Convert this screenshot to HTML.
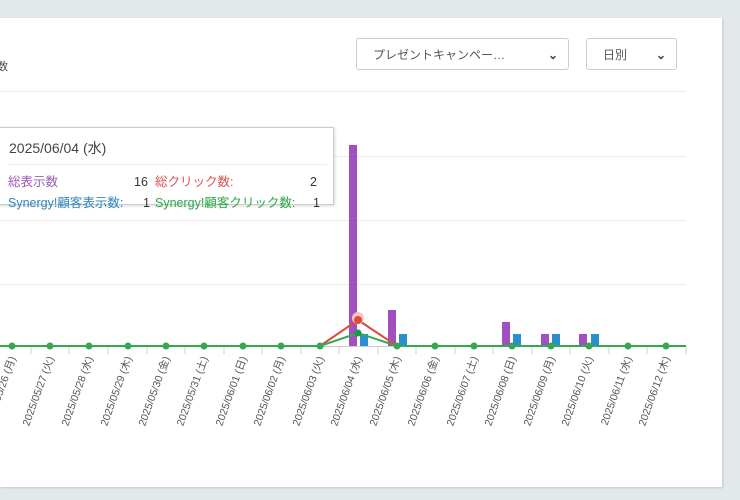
<!DOCTYPE html>
<html><head><meta charset="utf-8"><style>
body{margin:0;width:740px;height:500px;background:#e3e8eb;overflow:hidden;font-family:"Liberation Sans","Noto Sans CJK JP",sans-serif;position:relative}
.card{position:absolute;left:0;top:18px;width:722px;height:469px;background:#fff;box-shadow:1px 1px 2px #c5cacd}
.sel{position:absolute;top:38px;height:32px;border:1px solid #ccc;border-radius:3px;background:#fff;font-size:12px;color:#555;line-height:32px;box-sizing:border-box;padding-left:16px}
.sel span{position:absolute;right:10px;top:0;font-size:12px;font-weight:bold;color:#444}
.tip{position:absolute;left:-2px;top:127px;width:334px;height:76px;background:#fff;border:1px solid #ccc;box-shadow:1px 1px 3px rgba(0,0,0,.15);font-size:12.5px}
.tip div{line-height:16px;height:16px}
</style></head><body>
<div class="card"></div>
<div style="position:absolute;left:-3px;top:58px;font-size:11px;color:#444">数</div>
<div class="sel" style="left:356px;width:213px">プレゼントキャンペー…<span>⌄</span></div>
<div class="sel" style="left:586px;width:91px">日別<span>⌄</span></div>
<svg style="position:absolute;left:0;top:0" width="740" height="500">
<g stroke="#eaeaea" stroke-width="1">
<line x1="0" y1="91.5" x2="686" y2="91.5"/><line x1="0" y1="156.5" x2="686" y2="156.5"/><line x1="0" y1="220.5" x2="686" y2="220.5"/><line x1="0" y1="284.5" x2="686" y2="284.5"/>
</g>
<line x1="0" y1="346.5" x2="686" y2="346.5" stroke="#ccc"/>
<g stroke="#ccc">
<line x1="31" y1="346" x2="31" y2="354"/><line x1="69" y1="346" x2="69" y2="354"/><line x1="108" y1="346" x2="108" y2="354"/><line x1="147" y1="346" x2="147" y2="354"/><line x1="185" y1="346" x2="185" y2="354"/><line x1="224" y1="346" x2="224" y2="354"/><line x1="262" y1="346" x2="262" y2="354"/><line x1="301" y1="346" x2="301" y2="354"/><line x1="339" y1="346" x2="339" y2="354"/><line x1="378" y1="346" x2="378" y2="354"/><line x1="416" y1="346" x2="416" y2="354"/><line x1="455" y1="346" x2="455" y2="354"/><line x1="493" y1="346" x2="493" y2="354"/><line x1="532" y1="346" x2="532" y2="354"/><line x1="570" y1="346" x2="570" y2="354"/><line x1="609" y1="346" x2="609" y2="354"/><line x1="647" y1="346" x2="647" y2="354"/><line x1="686" y1="346" x2="686" y2="354"/>
</g>
<g fill="#a24fbf">
<rect x="349" y="145" width="8" height="201"/><rect x="388" y="310" width="8" height="36"/><rect x="502" y="322" width="8" height="24"/><rect x="541" y="334" width="8" height="12"/><rect x="579" y="334" width="8" height="12"/>
</g>
<g fill="#2a8fd0">
<rect x="360" y="334" width="8" height="12"/><rect x="399" y="334" width="8" height="12"/><rect x="513" y="334" width="8" height="12"/><rect x="552" y="334" width="8" height="12"/><rect x="591" y="334" width="8" height="12"/>
</g>
<polyline points="0,346 320,346 358,320 397,346 686,346" fill="none" stroke="#e04a3a" stroke-width="2"/>
<polyline points="0,346 320,346 358,333 397,346 686,346" fill="none" stroke="#34a853" stroke-width="2"/>
<circle cx="358" cy="318" r="6" fill="#f3c6c2"/><circle cx="358" cy="320" r="4" fill="#e04a3a"/>
<circle cx="358" cy="333" r="3.5" fill="#1a9a45"/>
<g fill="#3aa552">
<circle cx="12" cy="346" r="3.5"/><circle cx="50" cy="346" r="3.5"/><circle cx="89" cy="346" r="3.5"/><circle cx="128" cy="346" r="3.5"/><circle cx="166" cy="346" r="3.5"/><circle cx="204" cy="346" r="3.5"/><circle cx="243" cy="346" r="3.5"/><circle cx="281" cy="346" r="3.5"/><circle cx="320" cy="346" r="3.5"/><circle cx="397" cy="346" r="3.5"/><circle cx="435" cy="346" r="3.5"/><circle cx="474" cy="346" r="3.5"/><circle cx="512" cy="346" r="3.5"/><circle cx="551" cy="346" r="3.5"/><circle cx="589" cy="346" r="3.5"/><circle cx="628" cy="346" r="3.5"/><circle cx="666" cy="346" r="3.5"/>
</g>
<g font-size="10.5" fill="#555" text-anchor="end" font-family="Liberation Sans,Noto Sans CJK JP,sans-serif">
<text transform="translate(16,358) rotate(-70)">2025/05/26 (月)</text>
<text transform="translate(54,358) rotate(-70)">2025/05/27 (火)</text>
<text transform="translate(93,358) rotate(-70)">2025/05/28 (水)</text>
<text transform="translate(132,358) rotate(-70)">2025/05/29 (木)</text>
<text transform="translate(170,358) rotate(-70)">2025/05/30 (金)</text>
<text transform="translate(208,358) rotate(-70)">2025/05/31 (土)</text>
<text transform="translate(247,358) rotate(-70)">2025/06/01 (日)</text>
<text transform="translate(285,358) rotate(-70)">2025/06/02 (月)</text>
<text transform="translate(324,358) rotate(-70)">2025/06/03 (火)</text>
<text transform="translate(362,358) rotate(-70)">2025/06/04 (水)</text>
<text transform="translate(401,358) rotate(-70)">2025/06/05 (木)</text>
<text transform="translate(439,358) rotate(-70)">2025/06/06 (金)</text>
<text transform="translate(478,358) rotate(-70)">2025/06/07 (土)</text>
<text transform="translate(516,358) rotate(-70)">2025/06/08 (日)</text>
<text transform="translate(555,358) rotate(-70)">2025/06/09 (月)</text>
<text transform="translate(593,358) rotate(-70)">2025/06/10 (火)</text>
<text transform="translate(632,358) rotate(-70)">2025/06/11 (水)</text>
<text transform="translate(670,358) rotate(-70)">2025/06/12 (木)</text>
</g>
</svg>
<div class="tip">
<div style="position:absolute;left:10px;top:12px;font-size:14px;color:#444">2025/06/04 (水)</div>
<div style="position:absolute;left:8px;right:6px;top:36px;border-top:1px solid #eee;height:0"></div>
<div style="position:absolute;left:9px;top:46px;color:#9b59b6">総表示数</div>
<div style="position:absolute;left:135px;top:46px;color:#333">16</div>
<div style="position:absolute;left:156px;top:46px;color:#d9534f">総クリック数:</div>
<div style="position:absolute;left:311px;top:46px;color:#333">2</div>
<div style="position:absolute;left:9px;top:67px;color:#2e86c1">Synergy!顧客表示数:</div>
<div style="position:absolute;left:144px;top:67px;color:#333">1</div>
<div style="position:absolute;left:156px;top:67px;color:#28a745">Synergy!顧客クリック数:</div>
<div style="position:absolute;left:314px;top:67px;color:#333">1</div>
</div>
</body></html>
